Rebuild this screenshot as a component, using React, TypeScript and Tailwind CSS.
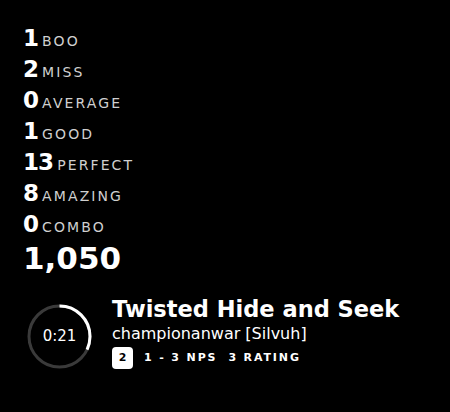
import React from "react";

const stats = [
  { n: "1", label: "BOO" },
  { n: "2", label: "MISS" },
  { n: "0", label: "AVERAGE" },
  { n: "1", label: "GOOD" },
  { n: "13", label: "PERFECT" },
  { n: "8", label: "AMAZING" },
  { n: "0", label: "COMBO" },
];

function Timer({ progress }: { progress: number }) {
  const r = 30.5;
  const c = 2 * Math.PI * r;
  return (
    <div className="relative w-[65px] h-[65px] shrink-0">
      <svg width="65" height="65" viewBox="0 0 65 65" className="-rotate-90">
        <circle cx="32.5" cy="32.5" r={r} fill="none" stroke="#3a3a3a" strokeWidth="3" />
        <circle
          cx="32.5"
          cy="32.5"
          r={r}
          fill="none"
          stroke="#ffffff"
          strokeWidth="3"
          strokeDasharray={`${c * progress} ${c}`}
        />
      </svg>
      <div className="absolute inset-0 flex items-center justify-center text-white text-[15px] font-medium">0:21</div>
    </div>
  );
}

export default function App() {
  return (
    <div className="w-[450px] h-[412px] bg-black text-white font-['DejaVu_Sans',sans-serif] overflow-hidden">
      <div className="pl-[23px] pt-[23px] flex flex-col">
        {stats.map((s, i) => (
          <div key={i} className="h-[31px] flex items-baseline">
            <span className="text-[23px] font-semibold leading-[31px] tracking-[-0.04em]">{s.n}</span>
            <span className="ml-[4px] text-[14px] font-medium tracking-[0.15em] text-[#d0d0d0]">{s.label}</span>
          </div>
        ))}
        <div className="text-[31px] font-bold leading-[38px] mt-[-1px]">1,050</div>
      </div>
      <div className="flex items-start mt-[27px] pl-[27px] gap-[20px]">
        <Timer progress={0.32} />
        <div className="flex flex-col mt-[-9px]">
          <div className="text-[22.5px] font-bold leading-[28px]">Twisted Hide and Seek</div>
          <div className="text-[16px] leading-[22px]">championanwar [Silvuh]</div>
          <div className="flex items-center mt-[2px] gap-[11px]">
            <span className="w-[21px] h-[22px] rounded-[4px] bg-white text-black text-[11px] font-bold flex items-center justify-center">2</span>
            <span className="text-[11px] font-bold tracking-[0.17em]">1 - 3 NPS</span>
            <span className="text-[11px] font-bold tracking-[0.17em]">3 RATING</span>
          </div>
        </div>
      </div>
    </div>
  );
}
